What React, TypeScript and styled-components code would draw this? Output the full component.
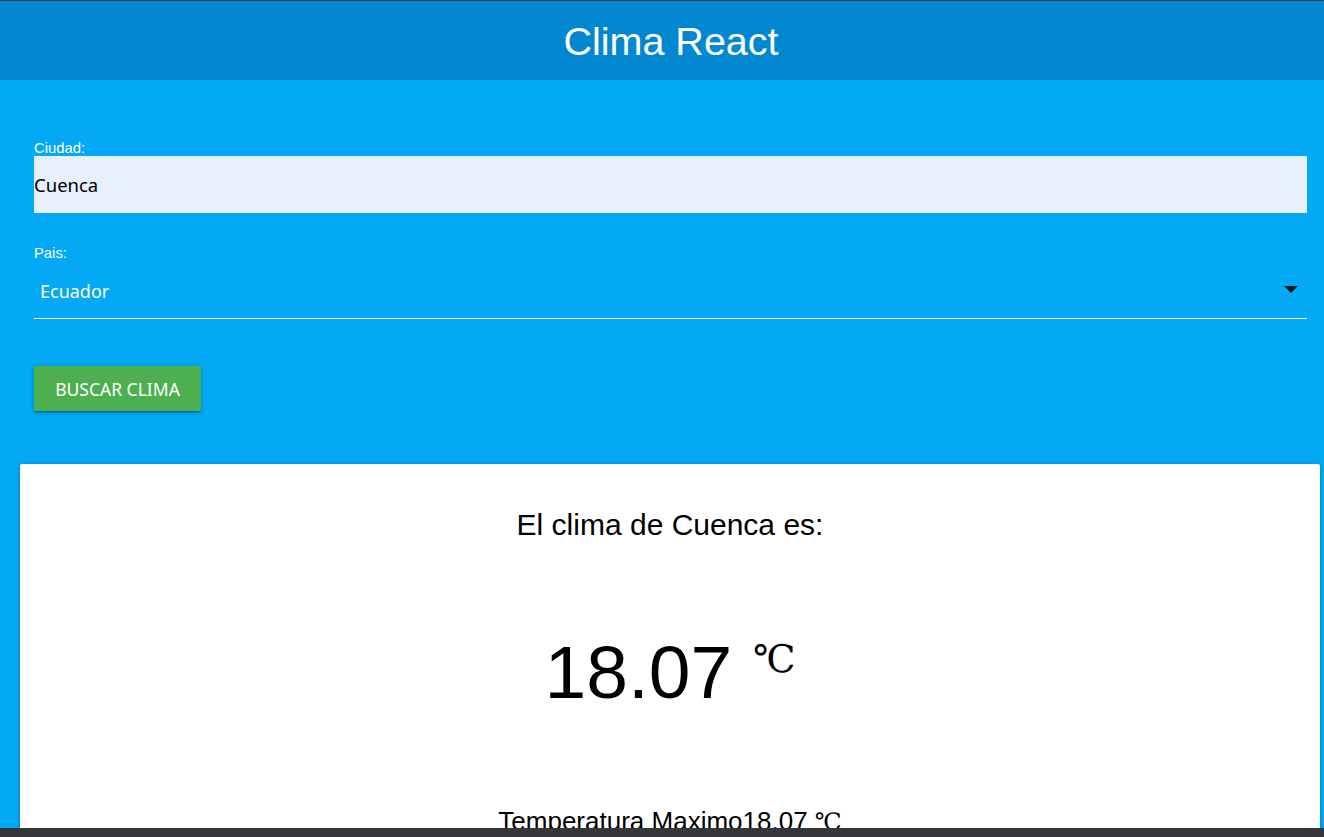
import React from "react";
import styled, { createGlobalStyle } from "styled-components";

const GlobalStyle = createGlobalStyle`
  html, body {
    margin: 0;
    padding: 0;
    background: #03a9f4;
    font-family: "Liberation Sans", Arial, sans-serif;
    overflow: hidden;
  }
  * { box-sizing: border-box; }
`;

const Header = styled.header`
  height: 80px;
  border-top: 1px solid #3a3d42;
  background: #0288d1;
  display: flex;
  align-items: center;
  justify-content: center;
  padding-left: 18px;
`;

const Title = styled.h1`
  margin: 0;
  padding-top: 2px;
  color: #ffffff;
  font-weight: 400;
  font-size: 39.5px;
  font-family: "Liberation Sans", Arial, sans-serif;
`;

const Form = styled.form`
  margin: 0 17px 0 34px;
  padding-top: 60px;
  display: flex;
  flex-direction: column;
`;

const Label = styled.label<{ $top?: number }>`
  display: block;
  color: #ffffff;
  font-size: 14.8px;
  line-height: 16px;
  margin-top: ${(p) => p.$top ?? 0}px;
  font-family: "Liberation Sans", Arial, sans-serif;
`;

const TextInput = styled.input`
  display: block;
  width: 100%;
  height: 57px;
  border: none;
  outline: none;
  padding: 0;
  background: #e8f0fe;
  color: #000000;
  font-size: 18.5px;
  font-family: "Noto Sans", "Open Sans", sans-serif;
`;

const SelectBox = styled.div`
  height: 58px;
  border-bottom: 1px solid #ffffff;
  display: flex;
  align-items: center;
  justify-content: space-between;
  padding: 3px 9px 0 6px;
  color: #ffffff;
  font-size: 18px;
  font-family: "Noto Sans", "Open Sans", sans-serif;
`;

const Arrow = styled.svg`
  width: 14px;
  height: 7px;
  margin-top: -4px;
`;

const Button = styled.button`
  align-self: flex-start;
  margin-top: 47px;
  width: 167px;
  height: 45px;
  border: none;
  border-radius: 2px;
  background: #4caf50;
  color: #ffffff;
  font-size: 17.5px;
  font-family: "Noto Sans", "Open Sans", sans-serif;
  letter-spacing: 0;
  padding: 0;
  box-shadow: 0 2px 2px 0 rgba(0, 0, 0, 0.14), 0 3px 1px -2px rgba(0, 0, 0, 0.12),
    0 1px 5px 0 rgba(0, 0, 0, 0.2);
  cursor: pointer;
`;

const Card = styled.section`
  margin: 53px 4px 0 20px;
  background: #ffffff;
  border-radius: 2px;
  box-shadow: 0 2px 2px 0 rgba(0, 0, 0, 0.14), 0 3px 1px -2px rgba(0, 0, 0, 0.12),
    0 1px 5px 0 rgba(0, 0, 0, 0.2);
  padding-top: 43px;
  min-height: 420px;
  text-align: center;
  color: #000000;
  font-family: "Liberation Sans", Arial, sans-serif;
`;

const CardTitle = styled.h2`
  margin: 0;
  font-weight: 400;
  font-size: 30px;
  line-height: 36px;
`;

const BigTemp = styled.p`
  margin: 92px 0 0;
  font-size: 75px;
  line-height: 75px;
`;

const Unit = styled.span<{ $size: number; $raise: number }>`
  font-family: "Liberation Serif", "DejaVu Serif", serif;
  font-size: ${(p) => p.$size}px;
  line-height: 1;
  vertical-align: ${(p) => p.$raise}px;
`;

const SmallTemp = styled.p`
  margin: 96px 0 0;
  font-size: 26px;
  line-height: 30px;
`;

const BottomBar = styled.div`
  position: fixed;
  left: 0;
  right: 0;
  bottom: 0;
  height: 9px;
  background: #35363a;
`;

export default function App() {
  return (
    <>
      <GlobalStyle />
      <Header>
        <Title>Clima React</Title>
      </Header>
      <Form onSubmit={(e) => e.preventDefault()}>
        <Label htmlFor="ciudad">Ciudad:</Label>
        <TextInput id="ciudad" defaultValue="Cuenca" />
        <Label $top={32}>Pais:</Label>
        <SelectBox role="button">
          <span>Ecuador</span>
          <Arrow viewBox="0 0 14 7">
            <polygon points="0,0 14,0 7,7" fill="#1a1a1a" />
          </Arrow>
        </SelectBox>
        <Button type="submit">BUSCAR CLIMA</Button>
      </Form>
      <Card>
        <CardTitle>El clima de Cuenca es:</CardTitle>
        <BigTemp>
          18.07 <Unit $size={38} $raise={26}>℃</Unit>
        </BigTemp>
        <SmallTemp>
          Temperatura Maximo18.07 <Unit $size={24} $raise={0}>℃</Unit>
        </SmallTemp>
      </Card>
      <BottomBar />
    </>
  );
}
